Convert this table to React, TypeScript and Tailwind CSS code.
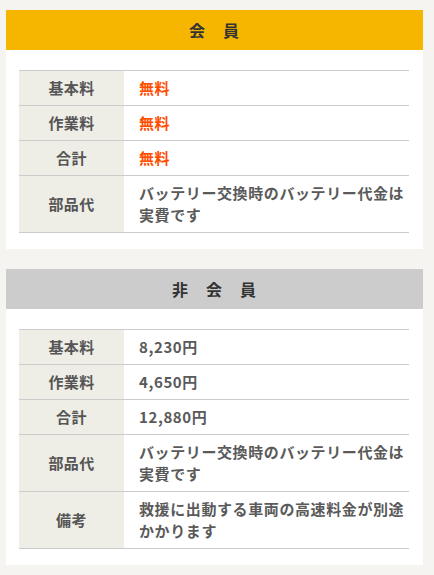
type Row = {
  label: string;
  value: string;
  red?: boolean;
};

const memberRows: Row[] = [
  { label: "基本料", value: "無料", red: true },
  { label: "作業料", value: "無料", red: true },
  { label: "合計", value: "無料", red: true },
  { label: "部品代", value: "バッテリー交換時のバッテリー代金は実費です" },
];

const guestRows: Row[] = [
  { label: "基本料", value: "8,230円" },
  { label: "作業料", value: "4,650円" },
  { label: "合計", value: "12,880円" },
  { label: "部品代", value: "バッテリー交換時のバッテリー代金は実費です" },
  { label: "備考", value: "救援に出動する車両の高速料金が別途かかります" },
];

function PriceCard({ title, head, rows }: { title: string; head: string; rows: Row[] }) {
  return (
    <section className="ml-[6px] w-[417px] bg-white">
      <h2
        className={`${head} h-10 flex items-center justify-center text-[16px] font-bold text-[#333] tracking-[1px]`}
      >
        {title}
      </h2>
      <div className="pt-5 pb-4 pl-[13px] pr-[14px]">
        <table className="w-full border-collapse text-[15px] font-bold tracking-[0.4px] leading-[22px]">
          <tbody>
            {rows.map((row) => (
              <tr key={row.label} className="border-y border-[#cccccc]">
                <td className="w-[105px] bg-[#eeede6] text-center text-[#555] py-[6px]">
                  {row.label}
                </td>
                <td
                  className={`pl-[15px] py-[6px] ${row.red ? "text-[#ff4d00]" : "text-[#5a5a5a] tracking-[0.6px]"}`}
                >
                  {row.value}
                </td>
              </tr>
            ))}
          </tbody>
        </table>
      </div>
    </section>
  );
}

export default function App() {
  return (
    <div
      className="min-h-[575px] bg-[#f5f4f1] pt-[10px] flex flex-col gap-5"
      style={{ fontFamily: '"Noto Sans CJK JP", "Noto Sans", sans-serif' }}
    >
      <PriceCard title="会　員" head="bg-[#f6b600]" rows={memberRows} />
      <PriceCard title="非　会　員" head="bg-[#cccccc]" rows={guestRows} />
    </div>
  );
}
